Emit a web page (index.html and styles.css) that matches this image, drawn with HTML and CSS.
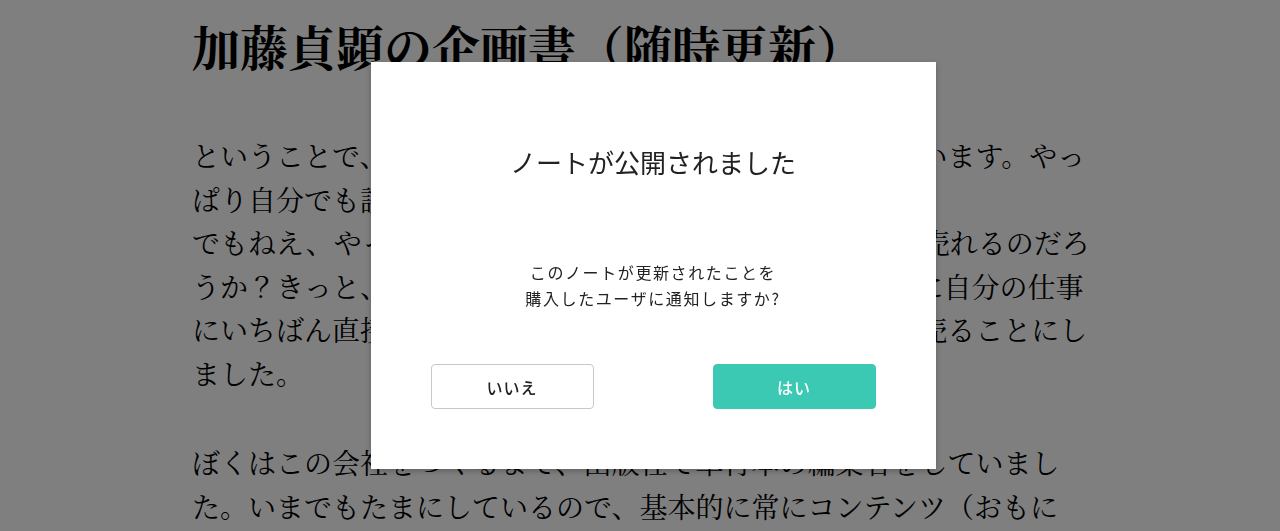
FILE: index.html
```html
<!DOCTYPE html>
<html lang="ja">
<head>
<meta charset="utf-8">
<title>加藤貞顕の企画書（随時更新）</title>
<link rel="stylesheet" href="styles.css">
</head>
<body>
<main class="article">
  <h1 class="article-title">加藤貞顕の企画書（随時更新）</h1>
  <p class="article-text">ということで、これから企画書を随時更新していこうと思います。やっぱり自分でも読みたいものをつくりたいので。<br>でもねえ、やっぱりこういう企画書みたいなものが本当に売れるのだろうか？きっと、誰かの役に立つはず。そこでまず、ためしに自分の仕事にいちばん直接かかわるこの企画書を、ノートで有料で販売ることにしました。</p>
  <p class="article-text">ぼくはこの会社をつくるまで、出版社で単行本の編集者をしていました。いまでもたまにしているので、基本的に常にコンテンツ（おもに本）のことを考えています。</p>
</main>

<div class="overlay">
  <div class="modal" role="dialog">
    <h2 class="modal-title">ノートが公開されました</h2>
    <p class="modal-text">このノートが更新されたことを<br>購入したユーザに通知しますか?</p>
    <div class="modal-actions">
      <button class="btn btn-no" type="button">いいえ</button>
      <button class="btn btn-yes" type="button">はい</button>
    </div>
  </div>
</div>
</body>
</html>
```

FILE: styles.css
```css
html, body {
  margin: 0;
  padding: 0;
  background: #ffffff;
}

body {
  color: #000000;
  font-family: "Noto Serif CJK JP", "Noto Sans CJK JP", serif;
  overflow: hidden;
  height: 531px;
}

.article {
  width: 900px;
  margin-left: calc(50% - 448px);
  padding-top: 14px;
  box-sizing: border-box;
}

.article-title {
  font-size: 48px;
  font-weight: 700;
  line-height: 64px;
  margin: 0 0 56px;
  letter-spacing: 0;
}

.article-text {
  font-size: 28px;
  line-height: 43.5px;
  margin: 0 0 46px;
  font-weight: 400;
}

.overlay {
  position: fixed;
  inset: 0;
  background: rgba(0, 0, 0, 0.5);
  display: flex;
  align-items: center;
  justify-content: center;
  padding-left: 26px;
}

.modal {
  width: 565px;
  height: 407px;
  box-sizing: border-box;
  background: #ffffff;
  padding: 80px 60px 60px;
  display: flex;
  flex-direction: column;
  align-items: stretch;
  box-shadow: 0 2px 6px rgba(0, 0, 0, 0.25);
  font-family: "Noto Sans CJK JP", "Noto Sans", sans-serif;
  color: #222222;
}

.modal-title {
  margin: 0;
  font-size: 26px;
  font-weight: 400;
  line-height: 40px;
  text-align: center;
}

.modal-text {
  margin: 77px 0 0;
  font-size: 16px;
  line-height: 26px;
  letter-spacing: 1.6px;
  text-align: center;
}

.modal-actions {
  margin-top: auto;
  display: flex;
  justify-content: space-between;
}

.btn {
  width: 163px;
  height: 45px;
  border-radius: 4px;
  font-family: "Noto Sans CJK JP", "Noto Sans", sans-serif;
  font-size: 16px;
  letter-spacing: 1px;
  font-weight: 500;
  cursor: pointer;
  box-sizing: border-box;
}

.btn-no {
  background: #ffffff;
  border: 1px solid #c8c8c8;
  color: #222222;
}

.btn-yes {
  background: #3cc9b3;
  border: 1px solid #3cc9b3;
  color: #ffffff;
}
```
